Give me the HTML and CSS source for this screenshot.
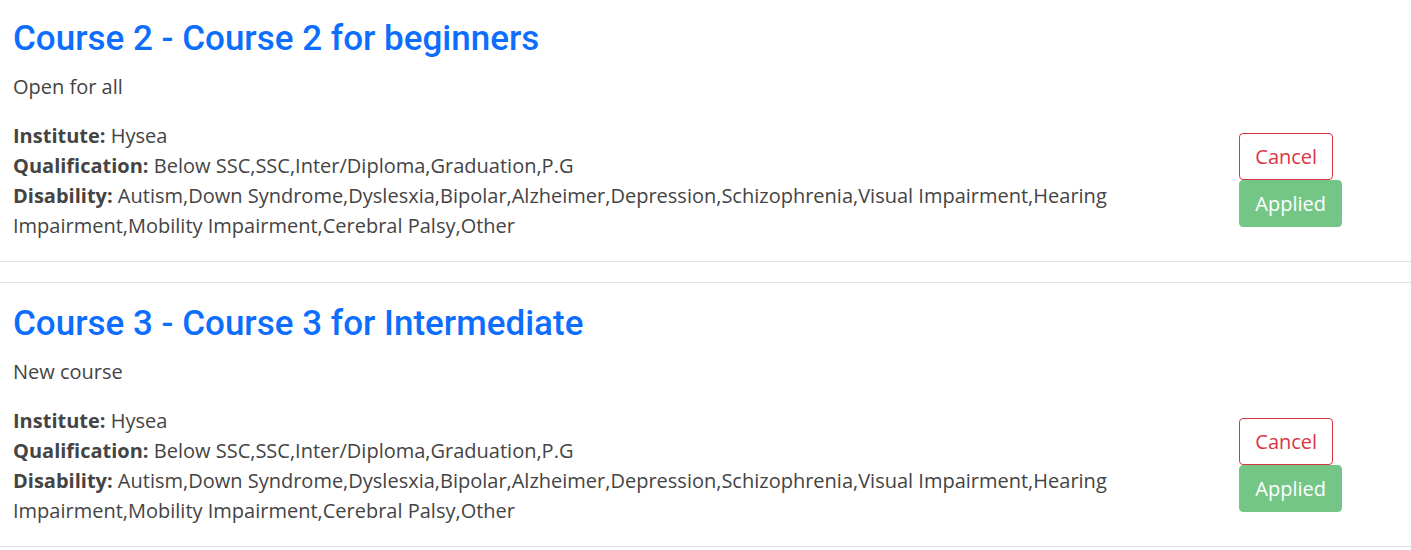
FILE: index.html
```html
<!DOCTYPE html>
<html>
<head>
<meta charset="utf-8">
<link rel="stylesheet" href="styles.css">
</head>
<body>
<div class="list">
  <div class="card">
    <div class="info">
      <h2 class="title">Course 2 - Course 2 for beginners</h2>
      <p class="desc">Open for all</p>
      <div class="meta">
        <div><b>Institute:</b> Hysea</div>
        <div><b>Qualification:</b> Below SSC,SSC,Inter/Diploma,Graduation,P.G</div>
        <div><b>Disability:</b> Autism,Down Syndrome,Dyslesxia,Bipolar,Alzheimer,Depression,Schizophrenia,Visual Impairment,Hearing Impairment,Mobility Impairment,Cerebral Palsy,Other</div>
      </div>
    </div>
    <div class="actions">
      <button class="btn btn-cancel">Cancel</button>
      <button class="btn btn-applied">Applied</button>
    </div>
  </div>
  <div class="card">
    <div class="info">
      <h2 class="title">Course 3 - Course 3 for Intermediate</h2>
      <p class="desc">New course</p>
      <div class="meta">
        <div><b>Institute:</b> Hysea</div>
        <div><b>Qualification:</b> Below SSC,SSC,Inter/Diploma,Graduation,P.G</div>
        <div><b>Disability:</b> Autism,Down Syndrome,Dyslesxia,Bipolar,Alzheimer,Depression,Schizophrenia,Visual Impairment,Hearing Impairment,Mobility Impairment,Cerebral Palsy,Other</div>
      </div>
    </div>
    <div class="actions">
      <button class="btn btn-cancel">Cancel</button>
      <button class="btn btn-applied">Applied</button>
    </div>
  </div>
</div>
</body>
</html>
```
FILE: styles.css
```css
html, body {
  margin: 0;
  padding: 0;
  background: #fff;
}
body {
  font-family: "Open Sans", sans-serif;
  color: #444;
  font-size: 20px;
}
.list {
  margin-top: -3px;
  display: flex;
  flex-direction: column;
  gap: 20px;
}
.card {
  display: flex;
  align-items: flex-start;
  border-top: 1px solid #dee2e6;
  border-bottom: 1px solid #dee2e6;
  padding: 20px 13px 20px 13px;
}
.info {
  width: 1110px;
}
.title {
  font-family: Roboto, sans-serif;
  font-weight: 500;
  font-size: 35px;
  line-height: 42px;
  color: #0d6efd;
  margin: 0;
}
.desc {
  margin: 12px 0 19px;
  line-height: 30px;
}
.meta {
  line-height: 30px;
}
.meta b {
  font-weight: 700;
}
.actions {
  margin-left: auto;
  margin-right: 56px;
  display: flex;
  flex-direction: column;
  align-items: flex-start;
  align-self: flex-end;
  margin-bottom: 14px;
}
.btn {
  font-family: "Open Sans", sans-serif;
  font-size: 20px;
  border-radius: 4px;
  padding: 0 15px;
  height: 47px;
  cursor: pointer;
}
.btn-cancel {
  background: #fff;
  color: #dc3545;
  border: 1px solid #dc3545;
}
.btn-applied {
  background: #74c687;
  color: #fff;
  border: 1px solid #74c687;
}
```
